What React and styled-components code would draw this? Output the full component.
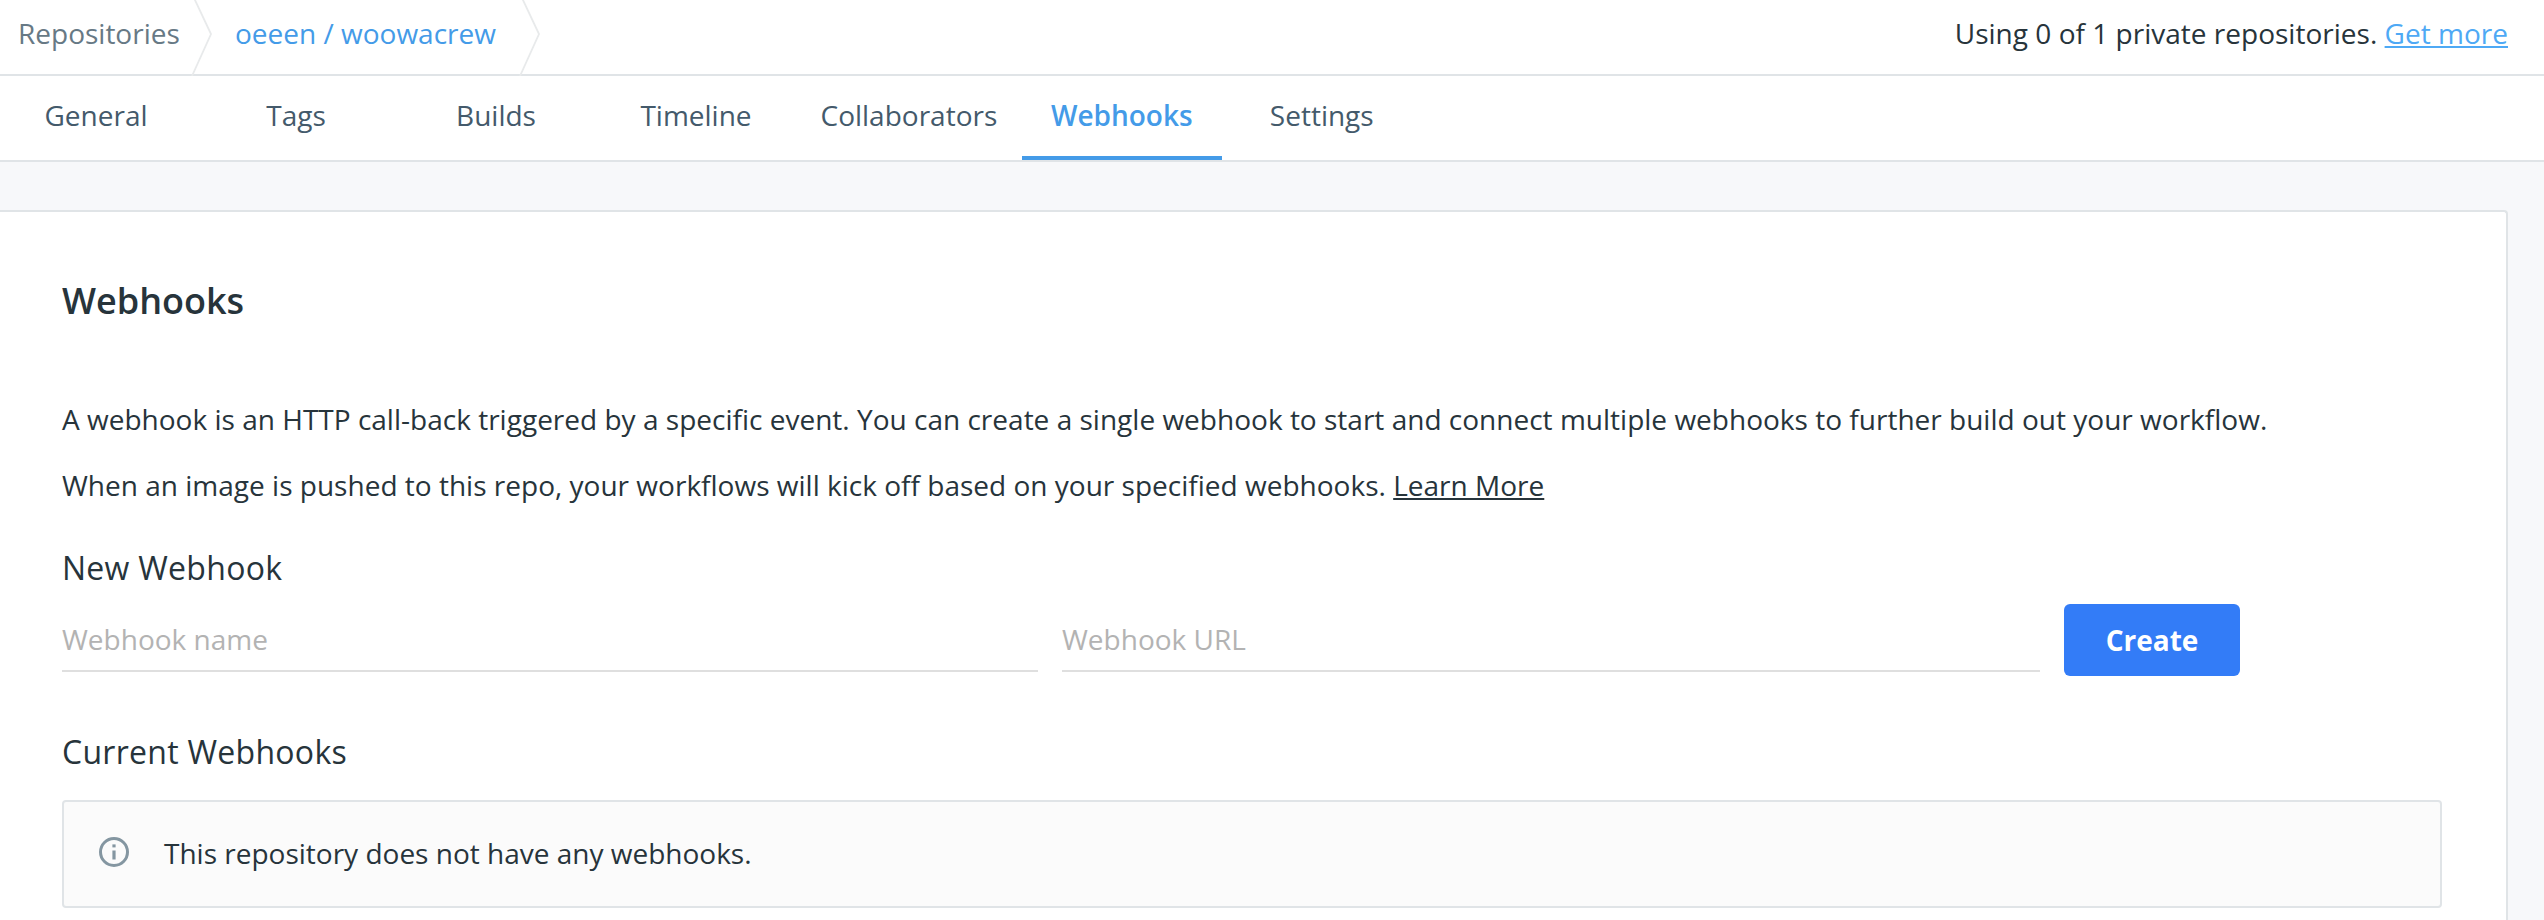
import React from "react";
import styled, { createGlobalStyle } from "styled-components";

const GlobalStyle = createGlobalStyle`
  *, *::before, *::after { box-sizing: border-box; }
  html, body { margin: 0; padding: 0; }
  body {
    height: 920px;
    overflow: hidden;
    background: #f7f8fa;
    color: #27343b;
    font-family: "Open Sans", "Noto Sans", sans-serif;
    font-size: 28px;
    line-height: 42px;
  }
`;

const Page = styled.div`
  display: flex;
  flex-direction: column;
  height: 920px;
  overflow: hidden;
`;

const TopBar = styled.header`
  display: flex;
  justify-content: space-between;
  height: 76px;
  padding: 0 36px 0 18px;
  background: #fff;
  border-bottom: 2px solid #e0e4e7;
`;

const Breadcrumbs = styled.nav`
  display: flex;
`;

const Crumb = styled.a`
  width: ${(p) => p.$width}px;
  padding-top: 12px;
  color: ${(p) => (p.$active ? "#449be8" : "#677985")};
  white-space: nowrap;
`;

const Chevron = styled.svg`
  flex: none;
  width: 22px;
  height: 76px;
  margin-right: ${(p) => p.$gap || 0}px;
`;

const Quota = styled.div`
  padding-top: 12px;
  white-space: nowrap;
  letter-spacing: 0.015px;
`;

const Link = styled.a`
  color: ${(p) => (p.$plain ? "inherit" : "#4ea9f5")};
  text-decoration: underline;
  text-decoration-thickness: 2px;
  text-underline-offset: 2px;
  text-decoration-skip-ink: none;
`;

const Tabs = styled.nav`
  display: flex;
  height: 86px;
  margin-left: -4px;
  background: #fff;
  border-bottom: 2px solid #e0e4e7;
`;

const Tab = styled.a`
  min-width: 200px;
  padding: 18px 24.5px 0;
  text-align: center;
  color: ${(p) => (p.$active ? "#449be8" : "#445a6b")};
  font-weight: ${(p) => (p.$active ? 600 : 400)};
  border-bottom: 4px solid ${(p) => (p.$active ? "#449be8" : "transparent")};
`;

const Panel = styled.main`
  flex: 1;
  margin: 48px 36px 0 -10px;
  padding: 65px 64px 0 70px;
  background: #fff;
  border: 2px solid #e0e4e7;
  border-bottom: 0;
  border-top-right-radius: 4px;
`;

const Title = styled.h1`
  margin: 0 0 73px;
  font-size: 36px;
  line-height: 48px;
  font-weight: 600;
`;

const Paragraph = styled.p`
  margin: 0 0 24px;
  white-space: nowrap;
  letter-spacing: 0.01px;
`;

const SectionTitle = styled.h2`
  margin: ${(p) => p.$top}px 0 ${(p) => p.$bottom}px;
  font-size: 32px;
  line-height: 44px;
  font-weight: 400;
  letter-spacing: 0.28px;
`;

const Form = styled.form`
  display: flex;
  align-items: flex-start;
  gap: 24px;
`;

const Input = styled.input`
  width: ${(p) => p.$width}px;
  height: 68px;
  padding: 4px 0 0;
  border: 0;
  border-bottom: 2px solid #dfdfdf;
  border-radius: 0;
  outline: 0;
  background: transparent;
  color: inherit;
  font: inherit;
  &::placeholder {
    color: #b3b3b3;
    opacity: 1;
  }
`;

const CreateButton = styled.button`
  width: 176px;
  height: 72px;
  padding: 0;
  border: 0;
  border-radius: 6px;
  background: #337cf7;
  color: #fff;
  font: inherit;
  font-weight: 700;
`;

const Notice = styled.div`
  display: flex;
  align-items: center;
  height: 108px;
  padding: 0 0 2px 35px;
  background: #fbfbfb;
  border: 2px solid #e0e4e7;
  border-radius: 4px;
`;

const InfoIcon = styled.svg`
  flex: none;
  width: 30px;
  height: 30px;
  margin: -2px 35px 0 0;
`;

const tabs = ["General", "Tags", "Builds", "Timeline", "Collaborators", "Webhooks", "Settings"];

function Separator({ gap }) {
  return (
    <Chevron viewBox="0 0 22 76" $gap={gap} aria-hidden="true">
      <path d="M3.5 -1L20 34L1 76" fill="none" stroke="#e8eaeb" strokeWidth="1.8" />
    </Chevron>
  );
}

export default function App() {
  return (
    <>
      <GlobalStyle />
      <Page>
        <TopBar>
          <Breadcrumbs>
            <Crumb $width={173}>Repositories</Crumb>
            <Separator gap={22} />
            <Crumb $width={284} $active>oeeen / woowacrew</Crumb>
            <Separator />
          </Breadcrumbs>
          <Quota>
            Using 0 of 1 private repositories. <Link>Get more</Link>
          </Quota>
        </TopBar>
        <Tabs>
          {tabs.map((t) => (
            <Tab key={t} $active={t === "Webhooks"}>{t}</Tab>
          ))}
        </Tabs>
        <Panel>
          <Title>Webhooks</Title>
          <Paragraph>
            A webhook is an HTTP call-back triggered by a specific event. You can create a single webhook to start and connect multiple webhooks to further build out your workflow.
          </Paragraph>
          <Paragraph>
            When an image is pushed to this repo, your workflows will kick off based on your specified webhooks. <Link $plain>Learn More</Link>
          </Paragraph>
          <SectionTitle $top={40} $bottom={14}>New Webhook</SectionTitle>
          <Form>
            <Input $width={976} placeholder="Webhook name" />
            <Input $width={978} placeholder="Webhook URL" />
            <CreateButton type="button">Create</CreateButton>
          </Form>
          <SectionTitle $top={54} $bottom={26}>Current Webhooks</SectionTitle>
          <Notice>
            <InfoIcon viewBox="0 0 30 30" aria-hidden="true">
              <circle cx="15" cy="15" r="13.5" fill="none" stroke="#8496a1" strokeWidth="3" />
              <rect x="13.4" y="7.4" width="3.2" height="3" fill="#8496a1" />
              <rect x="13.4" y="13.5" width="3.2" height="9" fill="#8496a1" />
            </InfoIcon>
            This repository does not have any webhooks.
          </Notice>
        </Panel>
      </Page>
    </>
  );
}
